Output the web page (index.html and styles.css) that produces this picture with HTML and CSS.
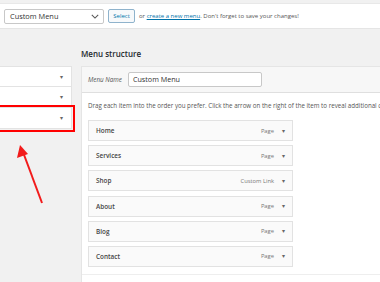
FILE: index.html
```html
<!DOCTYPE html>
<html lang="en">
<head>
    <meta charset="UTF-8">
    <title>Menus</title>
    <link rel="stylesheet" href="styles.css">
</head>
<body>
    <div class="topbar">
        <div class="fake-select">
            <span>Custom Menu</span>
            <svg class="chevron" viewBox="0 0 10 6" width="8" height="5"><path d="M1 1l4 4 4-4" fill="none" stroke="#555" stroke-width="1.3"/></svg>
        </div>
        <button class="select-btn">Select</button>
        <span class="top-note">or <a href="#">create a new menu</a>. Don't forget to save your changes!</span>
    </div>

    <div class="main">
        <div class="side">
            <div class="side-box"><span class="tri">&#9662;</span></div>
            <div class="side-box"><span class="tri">&#9662;</span></div>
            <div class="side-box marked"><span class="tri">&#9662;</span></div>
        </div>

        <div class="content">
            <h2 class="title">Menu structure</h2>
            <div class="panel">
                <div class="panel-head">
                    <label class="name-label">Menu Name</label>
                    <div class="name-input">Custom Menu</div>
                </div>
                <div class="panel-body">
                    <p class="hint">Drag each item into the order you prefer. Click the arrow on the right of the item to reveal additional configuration options.</p>
                    <ul class="items">
                        <li class="item"><b>Home</b><span class="type">Page</span><span class="tri">&#9662;</span></li>
                        <li class="item"><b>Services</b><span class="type">Page</span><span class="tri">&#9662;</span></li>
                        <li class="item"><b>Shop</b><span class="type">Custom Link</span><span class="tri">&#9662;</span></li>
                        <li class="item"><b>About</b><span class="type">Page</span><span class="tri">&#9662;</span></li>
                        <li class="item"><b>Blog</b><span class="type">Page</span><span class="tri">&#9662;</span></li>
                        <li class="item"><b>Contact</b><span class="type">Page</span><span class="tri">&#9662;</span></li>
                    </ul>
                    <div class="footer-line"></div>
                </div>
            </div>
        </div>
    </div>

    <svg class="arrow" width="60" height="70" viewBox="0 0 60 70">
        <line x1="42" y1="61" x2="23" y2="10" stroke="#f21b1b" stroke-width="2"/>
        <polygon points="20,3 17,16 28,12" fill="#f21b1b"/>
    </svg>
</body>
</html>
```

FILE: styles.css
```css
* {
    margin: 0;
    padding: 0;
    box-sizing: border-box;
}

body {
    background: #f1f1f1;
    font-family: "Open Sans", sans-serif;
    color: #444;
    overflow: hidden;
    position: relative;
    height: 282px;
}

.topbar {
    margin-top: 3px;
    height: 26px;
    background: #fff;
    border-top: 1px solid #e8e8e8;
    border-bottom: 1px solid #e5e5e5;
    display: flex;
    align-items: center;
    padding-left: 4px;
}

.fake-select {
    width: 100px;
    height: 15px;
    border: 1px solid #c8c8c8;
    border-radius: 2px;
    display: flex;
    align-items: center;
    justify-content: space-between;
    padding: 0 4px 0 5px;
    font-size: 7.4px;
    color: #333;
}

.chevron {
    display: block;
}

.select-btn {
    margin-left: 4px;
    width: 27px;
    height: 14px;
    border: 1px solid #8fb3cc;
    border-radius: 2px;
    background: #f7f9fb;
    color: #0073aa;
    font-family: "Open Sans", sans-serif;
    font-size: 6px;
}

.top-note {
    margin-left: 4px;
    font-size: 6px;
    color: #555;
}

.top-note a {
    color: #0073aa;
}

.main {
    display: flex;
    margin-top: 18px;
}

.side {
    width: 72px;
    flex-shrink: 0;
    margin-top: 19px;
}

.side-box {
    height: 21px;
    background: #fff;
    border: 1px solid #e3e3e3;
    border-left: none;
    border-top: none;
    display: flex;
    align-items: center;
    justify-content: flex-end;
    padding-right: 8px;
}

.side-box:first-child {
    border-top: 1px solid #e3e3e3;
}

.side-box.marked {
    outline: 2px solid #f00;
    outline-offset: 1px;
}

.tri {
    font-size: 6px;
    color: #666;
}

.content {
    margin-left: 9px;
    flex: 1;
    min-width: 0;
    overflow: hidden;
}

.title {
    font-size: 8px;
    font-weight: 600;
    color: #23282d;
    line-height: 14px;
    margin-bottom: 5px;
}

.panel {
    background: #fff;
    border-left: 1px solid #e5e5e5;
    border-top: 1px solid #e5e5e5;
    height: 230px;
}

.panel-head {
    height: 26px;
    background: #f7f7f7;
    border-bottom: 1px solid #dfdfdf;
    display: flex;
    align-items: center;
    padding-left: 6px;
}

.name-label {
    font-size: 6.3px;
    font-style: italic;
    color: #555;
}

.name-input {
    margin-left: 6px;
    width: 134px;
    height: 15px;
    background: #fff;
    border: 1px solid #c8c8c8;
    border-radius: 2px;
    font-size: 7.2px;
    color: #333;
    padding-left: 4px;
    line-height: 13px;
}

.panel-body {
    padding: 0 0 0 6px;
}

.hint {
    font-size: 6.2px;
    color: #555;
    white-space: nowrap;
    margin-top: 8px;
    line-height: 9px;
}

.items {
    list-style: none;
    margin-top: 10px;
    width: 205px;
}

.item {
    height: 21px;
    margin-bottom: 4.2px;
    background: #fafafa;
    border: 1px solid #e2e2e2;
    display: flex;
    align-items: center;
    padding: 0 7px 0 7px;
}

.item b {
    font-size: 6.4px;
    font-weight: 600;
    color: #444;
    flex: 1;
}

.item .type {
    font-size: 5.8px;
    color: #777;
    margin-right: 8px;
}

.footer-line {
    margin-top: 7px;
    border-top: 1px solid #eee;
    margin-left: -6px;
}

.arrow {
    position: absolute;
    left: 0;
    top: 142px;
}
```
